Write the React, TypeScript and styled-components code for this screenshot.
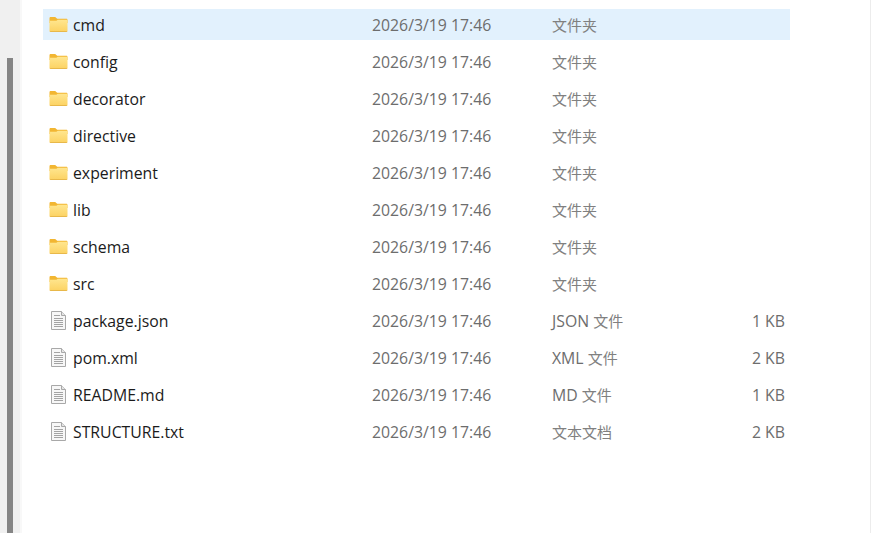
import { createGlobalStyle } from 'styled-components';
import styled from 'styled-components';

type Entry = {
  name: string;
  prefix?: string;
  kind: string;
  size?: string;
  folder?: boolean;
};

const entries: Entry[] = [
  { name: 'cmd', kind: '文件夹', folder: true },
  { name: 'config', kind: '文件夹', folder: true },
  { name: 'decorator', kind: '文件夹', folder: true },
  { name: 'directive', kind: '文件夹', folder: true },
  { name: 'experiment', kind: '文件夹', folder: true },
  { name: 'lib', kind: '文件夹', folder: true },
  { name: 'schema', kind: '文件夹', folder: true },
  { name: 'src', kind: '文件夹', folder: true },
  { name: 'package.json', prefix: 'JSON ', kind: '文件', size: '1 KB' },
  { name: 'pom.xml', prefix: 'XML ', kind: '文件', size: '2 KB' },
  { name: 'README.md', prefix: 'MD ', kind: '文件', size: '1 KB' },
  { name: 'STRUCTURE.txt', kind: '文本文档', size: '2 KB' },
];

function FolderIcon() {
  return (
    <svg width="19" height="15" viewBox="0 0 19 15">
      <defs>
        <linearGradient id="folderFront" x1="0" y1="0" x2="0" y2="1">
          <stop offset="0" stopColor="#ffe68f" />
          <stop offset="1" stopColor="#fcd262" />
        </linearGradient>
      </defs>
      <path d="M0.5 1.2C0.5 0.5 1 0 1.8 0H6.2L8.2 1.8H17.2C18 1.8 18.5 2.3 18.5 3.1V6H0.5Z" fill="#f2b632" />
      <path d="M0.5 3.8H7.4L8.8 2.8H17.3C18 2.8 18.5 3.3 18.5 4V13.6C18.5 14.4 18 14.9 17.2 14.9H1.8C1 14.9 0.5 14.4 0.5 13.6Z" fill="url(#folderFront)" />
      <path d="M0.5 14H18.5V13.6C18.5 14.4 18 14.9 17.2 14.9H1.8C1 14.9 0.5 14.4 0.5 13.6Z" fill="#e8b84a" />
    </svg>
  );
}

function FileIcon() {
  return (
    <svg width="15" height="19" viewBox="0 0 15 19">
      <path d="M0.5 0.5H10.5L14.5 4.5V18.5H0.5Z" fill="#f7f7f7" stroke="#a8a8a8" />
      <path d="M10.5 0.5V4.5H14.5" fill="#e4e4e4" stroke="#a8a8a8" />
      <path d="M3 4.5H9M3 7.5H12M3 9.5H12M3 11.5H12M3 13.5H12M3 15.5H12" stroke="#a3a3a3" />
    </svg>
  );
}

export default function App() {
  return (
    <>
      <GlobalStyle />
      <Page>
        <Rail>
          <Thumb />
        </Rail>
        <Pane>
          <List>
            {entries.map((entry, index) => (
              <Row key={entry.name} $selected={index === 0}>
                <IconSlot>{entry.folder ? <FolderIcon /> : <FileIcon />}</IconSlot>
                <Name>{entry.name}</Name>
                <Detail>2026/3/19 17:46</Detail>
                <Detail>
                  {entry.prefix}
                  <Han>{entry.kind}</Han>
                </Detail>
                <Size>{entry.size}</Size>
              </Row>
            ))}
          </List>
        </Pane>
        <RightEdge />
      </Page>
    </>
  );
}

const GlobalStyle = createGlobalStyle`
  html, body {
    margin: 0;
    height: 100%;
    background: #ffffff;
  }
  body {
    font-family: "Open Sans", "Noto Sans CJK SC", sans-serif;
    overflow: hidden;
  }
`;

const Page = styled.div`
  display: flex;
  width: 893px;
  height: 533px;
  overflow: hidden;
`;

const Rail = styled.div`
  flex: none;
  width: 22px;
  padding: 58px 0 0 7px;
  box-sizing: border-box;
  background: #f0f0f0;
  border-right: 2px solid #f8f8f8;
`;

const Thumb = styled.div`
  width: 6px;
  height: 100%;
  background: #858585;
`;

const Pane = styled.div`
  flex: none;
  width: 848px;
  padding: 9px 0 0 21px;
  box-sizing: border-box;
`;

const List = styled.div`
  display: flex;
  flex-direction: column;
  gap: 6px;
  width: 747px;
`;

const Row = styled.div<{ $selected: boolean }>`
  display: grid;
  grid-template-columns: 30px 299px 180px 1fr 60px;
  align-items: center;
  height: 31px;
  padding-right: 5px;
  box-sizing: border-box;
  font-size: 15.8px;
  background: ${({ $selected }) => ($selected ? '#e2f1fd' : 'transparent')};
`;

const IconSlot = styled.div`
  display: flex;
  justify-content: center;
`;

const Name = styled.span`
  color: #1b1b1b;
`;

const Detail = styled.span`
  color: #6d6d6d;
  white-space: nowrap;
`;

const Han = styled.span`
  font-size: 15px;
  color: #808080;
`;

const Size = styled(Detail)`
  text-align: right;
`;

const RightEdge = styled.div`
  flex: none;
  width: 23px;
  border-left: 1px solid #ececec;
`;
